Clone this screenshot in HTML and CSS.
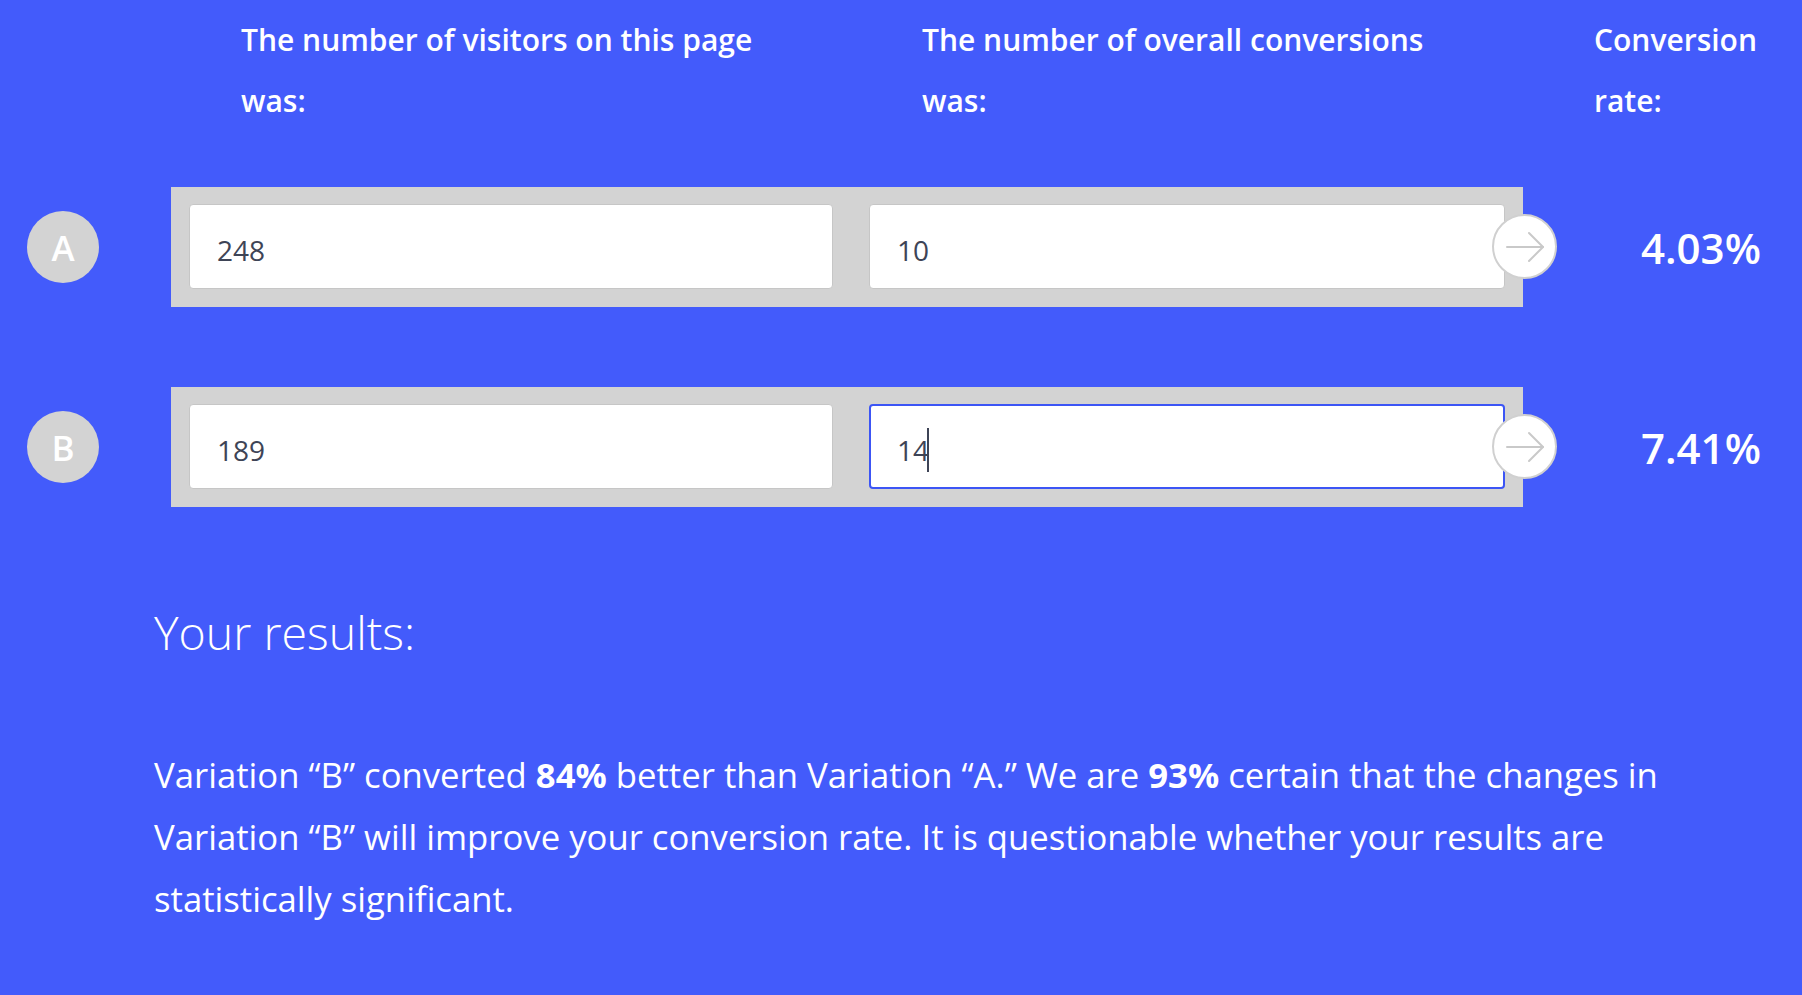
FILE: index.html
```
<!DOCTYPE html>
<html lang="en">
<head>
    <meta charset="UTF-8">
    <meta name="viewport" content="width=device-width, initial-scale=1.0">
    <title>A/B Test Calculator</title>
    <link rel="stylesheet" href="styles.css">
</head>
<body>
    <main class="calculator">
        <div class="labels">
            <div class="label">The number of visitors on this page was:</div>
            <div class="label">The number of overall conversions was:</div>
            <div class="label label-rate">Conversion rate:</div>
        </div>

        <div class="variation">
            <div class="badge">A</div>
            <div class="fields">
                <input type="text" class="field field-visitors" value="248">
                <input type="text" class="field" value="10">
                <button class="go" type="button" aria-label="Calculate">
                    <svg width="40" height="32" viewBox="0 0 40 32" fill="none" stroke="#c9c9c9" stroke-width="2" stroke-linecap="round" stroke-linejoin="round">
                        <path d="M2 16H38"/>
                        <path d="M24 2L38 16L24 30"/>
                    </svg>
                </button>
            </div>
            <div class="rate">4.03%</div>
        </div>

        <div class="variation">
            <div class="badge">B</div>
            <div class="fields">
                <input type="text" class="field field-visitors" value="189">
                <input type="text" class="field focused" value="14">
                <span class="caret"></span>
                <button class="go" type="button" aria-label="Calculate">
                    <svg width="40" height="32" viewBox="0 0 40 32" fill="none" stroke="#c9c9c9" stroke-width="2" stroke-linecap="round" stroke-linejoin="round">
                        <path d="M2 16H38"/>
                        <path d="M24 2L38 16L24 30"/>
                    </svg>
                </button>
            </div>
            <div class="rate">7.41%</div>
        </div>

        <section class="results">
            <h2>Your results:</h2>
            <p>Variation &ldquo;B&rdquo; converted <strong>84%</strong> better than Variation &ldquo;A.&rdquo; We are <strong>93%</strong> certain that the changes in Variation &ldquo;B&rdquo; will improve your conversion rate. It is questionable whether your results are statistically significant.</p>
        </section>
    </main>
</body>
</html>
```

FILE: styles.css
```
body {
    margin: 0;
    background-color: #435bfb;
    color: #fff;
    font-family: "Open Sans", Lato, sans-serif;
}
.calculator {
    min-height: 995px;
    box-sizing: border-box;
}
.labels {
    display: grid;
    grid-template-columns: 681px 672px 1fr;
    padding: 9px 0 0 241px;
}
.label {
    max-width: 555px;
    font-size: 30px;
    font-weight: 600;
    line-height: 61px;
}
.label-rate {
    max-width: 190px;
}
.variation {
    display: flex;
    align-items: center;
    margin-top: 56px;
}
.variation + .variation {
    margin-top: 80px;
}
.badge {
    width: 72px;
    height: 72px;
    margin: 0 72px 0 27px;
    border-radius: 50%;
    background-color: #d3d3d3;
    color: #fff;
    font-size: 35px;
    font-weight: 600;
    display: flex;
    align-items: center;
    justify-content: center;
}
.fields {
    position: relative;
    width: 1352px;
    height: 120px;
    box-sizing: border-box;
    padding: 17px 18px 18px 18px;
    background-color: #d3d3d3;
    display: flex;
    gap: 36px;
}
.field {
    flex: 1;
    min-width: 0;
    height: 85px;
    box-sizing: border-box;
    padding: 6px 0 0 27px;
    border: 1px solid #c6c6c6;
    border-radius: 4px;
    background-color: #fff;
    color: #3e4456;
    font-family: "Open Sans", Lato, sans-serif;
    font-size: 28px;
    outline: none;
}
.field-visitors {
    flex: 0 0 644px;
}
.field.focused {
    border: 2px solid #3c55f5;
    padding-left: 26px;
}
.caret {
    position: absolute;
    left: 756px;
    top: 41px;
    width: 2px;
    height: 44px;
    background-color: #3e4456;
}
.go {
    position: absolute;
    top: 27px;
    right: -34px;
    width: 65px;
    height: 65px;
    padding: 0;
    border: 2px solid #d0d0d0;
    border-radius: 50%;
    background-color: #fff;
    display: flex;
    align-items: center;
    justify-content: center;
    cursor: pointer;
}
.rate {
    flex: 1;
    margin-left: 77px;
    text-align: center;
    font-size: 42px;
    font-weight: 600;
}
.results {
    padding: 0 0 0 154px;
    margin-top: 95px;
}
.results h2 {
    margin: 0;
    font-size: 46.5px;
    font-weight: 300;
    line-height: 60px;
}
.results p {
    max-width: 1560px;
    margin: 82px 0 0 0;
    font-size: 34.7px;
    line-height: 62px;
}
.results strong {
    font-weight: 700;
}
```
